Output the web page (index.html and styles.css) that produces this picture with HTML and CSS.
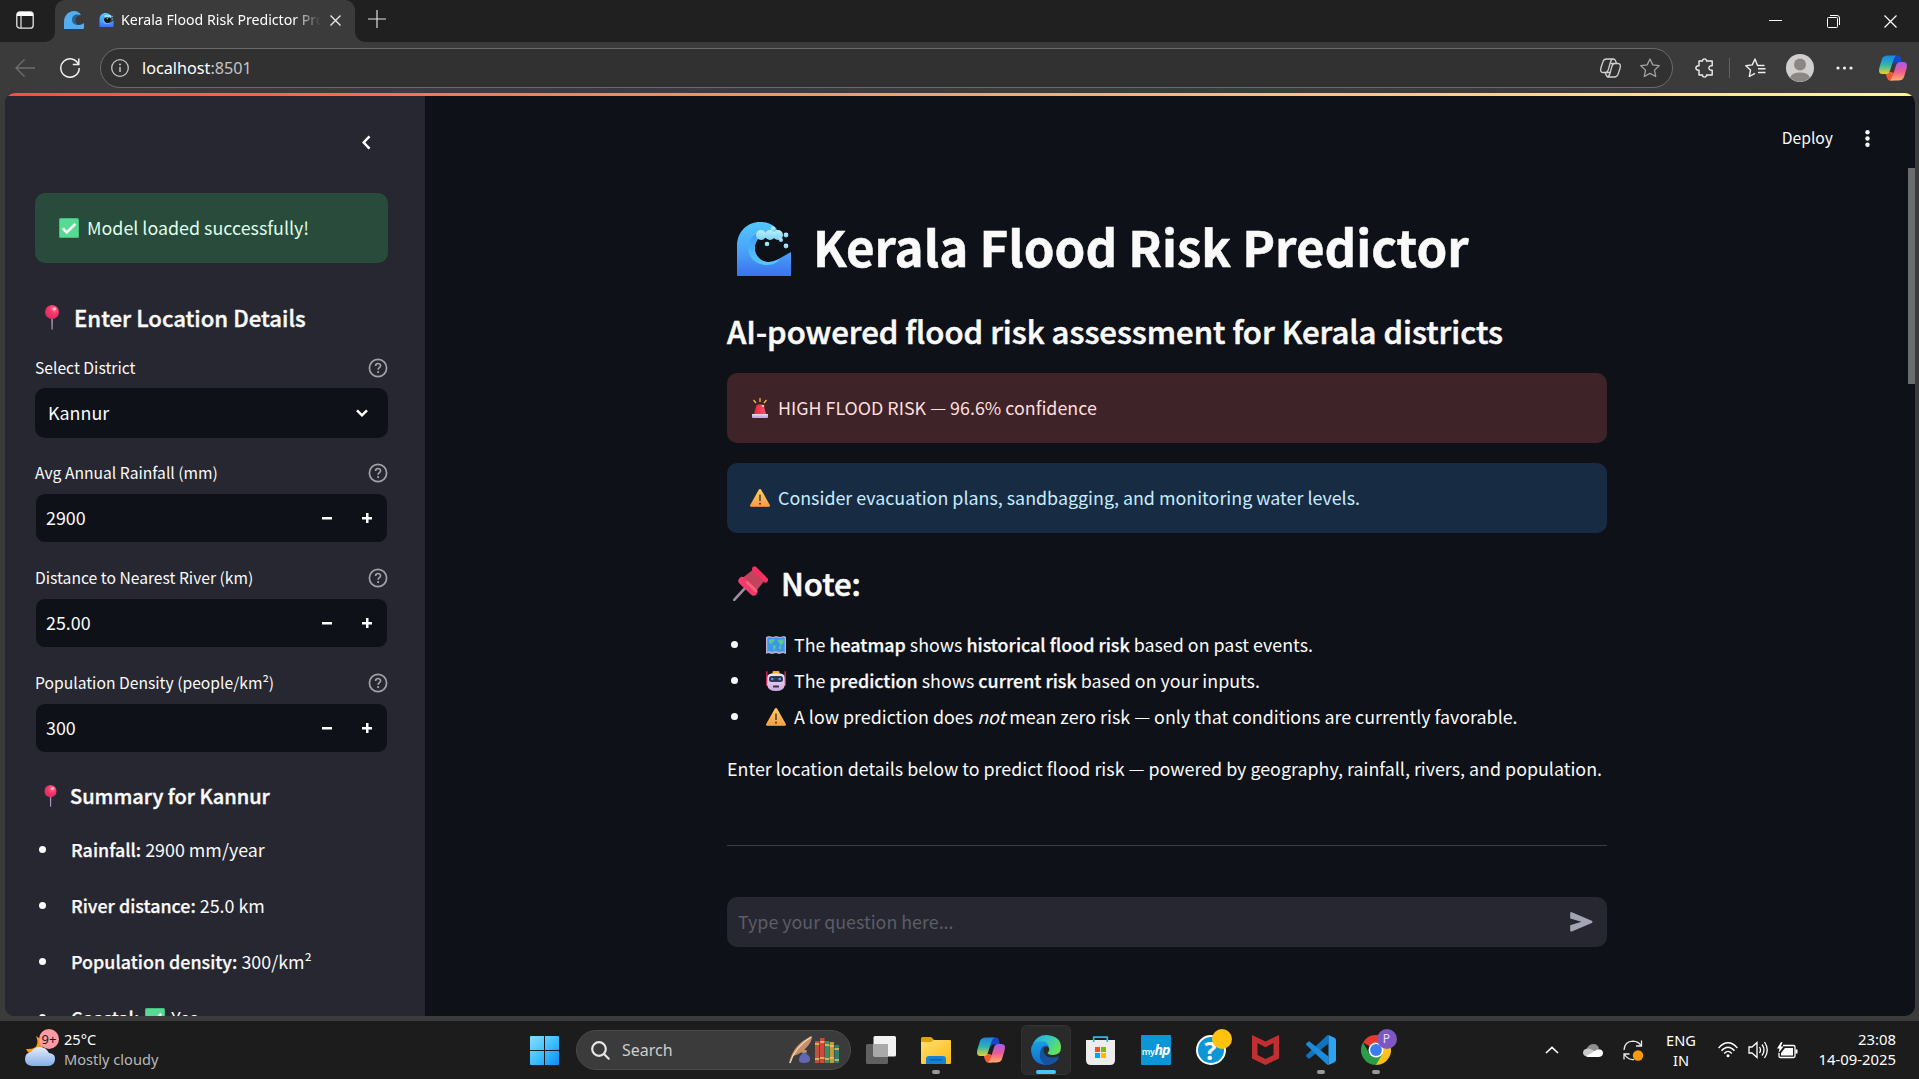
FILE: index.html
```html
<!DOCTYPE html>
<html lang="en">
<head>
<meta charset="utf-8">
<title>Kerala Flood Risk Predictor</title>
<link rel="stylesheet" href="styles.css">
</head>
<body>
<svg class="defs" width="0" height="0" aria-hidden="true">
  <defs>
    <linearGradient id="waveBlue" x1="0" y1="0" x2="0" y2="1"><stop offset="0" stop-color="#52c8ff"/><stop offset=".55" stop-color="#4aa0f8"/><stop offset="1" stop-color="#3a72ee"/></linearGradient>
    <linearGradient id="waveRim" x1="0" y1="0" x2="0" y2="1"><stop offset="0" stop-color="#3f9af5"/><stop offset="1" stop-color="#55c9ff"/></linearGradient>
    <linearGradient id="foam" x1="0" y1="0" x2="0" y2="1"><stop offset="0" stop-color="#b8f2fd"/><stop offset="1" stop-color="#7fd2f5"/></linearGradient>
    <radialGradient id="pinBall" cx=".65" cy=".3" r=".75"><stop offset="0" stop-color="#ff6d8f"/><stop offset=".5" stop-color="#f8326a"/><stop offset="1" stop-color="#cf2f60"/></radialGradient>
    <linearGradient id="amber" x1="0" y1="0" x2="0" y2="1"><stop offset="0" stop-color="#ffd052"/><stop offset="1" stop-color="#f79a4e"/></linearGradient>
    <linearGradient id="siren" x1="0" y1="0" x2="1" y2="0"><stop offset="0" stop-color="#e9263c"/><stop offset="1" stop-color="#ff4f6c"/></linearGradient>
    <linearGradient id="robotFace" x1="0" y1="0" x2="0" y2="1"><stop offset="0" stop-color="#f1e9f5"/><stop offset="1" stop-color="#c9a8e0"/></linearGradient>
    <linearGradient id="cpA" x1="0" y1="0" x2="0" y2="1"><stop offset="0" stop-color="#1a84ea"/><stop offset=".5" stop-color="#2fb5b0"/><stop offset="1" stop-color="#e8d12c"/></linearGradient>
    <linearGradient id="cpB" x1="0" y1="0" x2="0" y2="1"><stop offset="0" stop-color="#a35cf0"/><stop offset=".5" stop-color="#ee5a92"/><stop offset="1" stop-color="#ffb067"/></linearGradient>
    <linearGradient id="winBlue" x1="0" y1="0" x2="1" y2="1"><stop offset="0" stop-color="#8adcff"/><stop offset=".5" stop-color="#3fc1fd"/><stop offset="1" stop-color="#0a8bf5"/></linearGradient>
    <linearGradient id="edgeTop" x1="0" y1="0" x2="1" y2=".5"><stop offset="0" stop-color="#2aa9e0"/><stop offset=".5" stop-color="#32c5c5"/><stop offset="1" stop-color="#66e05a"/></linearGradient>
    <linearGradient id="edgeBody" x1="0" y1="0" x2="0" y2="1"><stop offset="0" stop-color="#1b9de2"/><stop offset="1" stop-color="#0f6fd0"/></linearGradient>
    <linearGradient id="folder" x1="0" y1="0" x2="1" y2="1"><stop offset="0" stop-color="#ffdf70"/><stop offset="1" stop-color="#fdb913"/></linearGradient>
    <linearGradient id="cloud" x1="0" y1="0" x2="0" y2="1"><stop offset="0" stop-color="#e4edfb"/><stop offset="1" stop-color="#84aeea"/></linearGradient>

    <symbol id="i-wave" viewBox="0 0 54 54">
      <path d="M0 54V24C0 10 10 0 23 0c7 0 12 2 16 6l6 13-10 0C24 15 17 21 17 28c0 8 7 12 14 12 8 0 15-6 23-10v24z" fill="url(#waveBlue)"/>
      <path d="M22 11c-7 2-11 8-11 15 0 10 9 17 19 17 7 0 11-3 14-7-4 2-8 4-12 4-8 0-14-6-14-14 0-4 2-8 5-10z" fill="url(#waveRim)"/>
      <path d="M22 16h20l2 10-6 9q-8 5-14 1-6-4-6-11 1-6 4-9z" fill="#0e1117" class="wave-hollow"/>
      <g fill="url(#foam)"><circle cx="24" cy="13" r="5"/><circle cx="33" cy="13" r="5"/><circle cx="41" cy="13" r="5"/><circle cx="36" cy="7" r="2.4"/><circle cx="49" cy="13" r="2.4"/><circle cx="49" cy="24" r="2.4"/><circle cx="30" cy="22" r="2.3"/><circle cx="44" cy="18" r="2"/></g>
    </symbol>
    <symbol id="i-check" viewBox="0 0 20 20"><rect width="20" height="20" rx="1.5" fill="#43bf7d"/><rect x="1" y="1" width="18" height="18" rx="1.5" fill="#59da93"/><path d="M3.8 10.4l4 4.1 8.5-8.6" fill="none" stroke="#fff" stroke-width="2.5"/></symbol>
    <symbol id="i-pin" viewBox="0 0 14 25"><path d="M6.3 13h1.6l-.2 11.3-.6.7-.6-.7z" fill="#a797b0"/><circle cx="7" cy="7" r="7" fill="url(#pinBall)"/><ellipse cx="9.3" cy="4" rx="1.7" ry="1.4" fill="#ffc4d3"/></symbol>
    <symbol id="i-pushpin" viewBox="0 0 34 34">
      <path d="M1.2 33L13 20" stroke="#9b8d9c" stroke-width="2.6" stroke-linecap="round"/>
      <path d="M10 11l9-7 11 11-8 10z" fill="#c3425c"/>
      <path d="M21 3L31.500 13.500" stroke="#f92f62" stroke-width="5" stroke-linecap="round"/>
      <path d="M9 14.500L20 25" stroke="#f53a6e" stroke-width="7.500" stroke-linecap="round"/>
      <path d="M14 16l8 8" stroke="#ff5f78" stroke-width="3" stroke-linecap="round"/>
    </symbol>
    <symbol id="i-siren" viewBox="0 0 16 20"><path d="M8 0v4M1.500 2l2.500 3M14.500 2L12 5" stroke="#f3bb3b" stroke-width="1.3"/><path d="M2 16L4 8.500C4.500 5.500 11.500 5.500 12 8.500L14 16z" fill="url(#siren)"/><circle cx="11" cy="8" r="1.300" fill="#ffb7bd"/><rect y="16" width="16" height="4" rx="1" fill="#c8b0dc"/><rect y="16" width="16" height="1.500" fill="#e0d0ec"/></symbol>
    <symbol id="i-warn" viewBox="0 0 20 18"><path d="M10 0q.8 0 1.200.7L19.800 16q.6 1.500-1 1.700H1.200Q-.4 17.500.2 16L8.800.7Q9.200 0 10 0z" fill="url(#amber)"/><path d="M1 17.500h18" stroke="#dc8240" stroke-width=".9"/><path d="M10 5.500v6.500" stroke="#5b4846" stroke-width="1.700"/><circle cx="10" cy="14.700" r="1.100" fill="#5b4846"/></symbol>
    <symbol id="i-map" viewBox="0 0 20 18"><path d="M0 1l3-1 4 1 3-1 4 1 4-1 2 1v17l-3-1-4 1-3-1-4 1-4-1-2 1z" fill="#b9add0"/><path d="M1.300 2l2-.7 3.700 1 3-1 4 1 3-1 1.700.7v14l-2-.7-3.700.7-3-1-4 1-3-1-1.700.7z" fill="#3c97e8"/><path d="M3 3.500l6-.5-1 2-2 2-1 1.500-2-2zM7 9l3 1-1 3-1.500 2zM11.500 4l6-.8v4l-2 1-1 2-1-3zM13 10l2 .7-.5 3-1.500-1z" fill="#59cb8e"/></symbol>
    <symbol id="i-robot" viewBox="0 0 20 20"><path d="M.8.300v9M19.200.300v9" stroke="#d52b59" stroke-width="1.400"/><rect y="7" width="20" height="8" rx="1.500" fill="#d32d5c"/><rect x="6.500" y="0" width="7" height="4" rx="1" fill="#f5ae28"/><path d="M1.500 5q1-2.500 4-2.500h9q3 0 4 2.500l.3 9q-.8 6-8.800 6t-8.800-6z" fill="url(#robotFace)"/><rect x="3" y="5" width="14" height="6" rx="2.500" fill="#353454"/><circle cx="6.300" cy="8" r="1.300" fill="#2da9f5"/><circle cx="13.700" cy="8" r="1.300" fill="#2da9f5"/><rect x="7" y="14.500" width="6" height="2" rx=".6" fill="#383345"/></symbol>
    <symbol id="i-help" viewBox="0 0 20 20"><circle cx="10" cy="10" r="8.600" fill="none" stroke="#a2a3a8" stroke-width="1.700"/><path d="M7.600 8c0-3.300 5-3.100 5-.3 0 1.800-2.500 2-2.500 4" fill="none" stroke="#a2a3a8" stroke-width="1.600"/><circle cx="10.100" cy="14.100" r="1.100" fill="#a2a3a8"/></symbol>
    <symbol id="i-copilot" viewBox="0 0 28 26">
      <path d="M14 .5h5q2 0 2.700 2l1.300 5h-7l-3 2z" fill="#1846c8"/>
      <path d="M6 17h7l4 3-2 5.500H11q-2 0-2.700-2z" fill="#ee5a33"/>
      <path d="M9 .5h8.500q-2 .8-3 4L11 15.500Q10 19 7 19H3.500Q0 19 0 15.500q0-2 1-5L3 4Q4 .5 9 .5z" fill="url(#cpA)"/>
      <path d="M19 25.500H10.500q2-.8 3-4L17 10.500Q18 7 21 7h3.500Q28 7 28 10.500q0 2-1 5L25 22q-1 3.500-6 3.500z" fill="url(#cpB)"/>
    </symbol>
  </defs>
</svg>

<div class="browser">
  <div class="tabstrip">
    <div class="strip-left"><svg width="18" height="18" viewBox="0 0 18 18"><rect x=".8" y=".8" width="16.400" height="16.400" rx="3" fill="none" stroke="#e6e6e6" stroke-width="1.300"/><path d="M1 5V4q0-3 3-3h10q3 0 3 3v1z" fill="#fff"/><path d="M5 5v12" stroke="#e6e6e6" stroke-width="1.200"/></svg></div>
    <div class="tab">
      <svg class="favicon" width="20" height="18" viewBox="0 0 20 18"><path d="M7 9l1-5 7-1 2 5-1 5-5 2z" fill="#226699"/><path d="M0 18V11C0 5 4 0 10 0c3.500 0 6 1.500 7 4.500-4-2.500-9-.5-9 4 0 4 3 5.500 6 5.500 2.500 0 4.500-.8 6-2V17q0 1-1 1z" fill="#55acee"/><path d="M17 4.500Q12.500 4 11.500 8t3 5.900Q20 13 17 4.500z" fill="#3b3b3b"/></svg>
      <svg class="tab-emoji" width="15" height="14"><use href="#i-wave"/></svg>
      <span class="tab-title">Kerala Flood Risk Predictor Pro</span>
      <svg class="tab-close" width="11" height="11" viewBox="0 0 11 11"><path d="M.5.500l10 10M10.500.500l-10 10" stroke="#e8e8e8" stroke-width="1.400"/></svg>
    </div>
    <div class="strip-right">
      <svg class="newtab" width="18" height="18" viewBox="0 0 18 18"><path d="M9 0v18M0 9h18" stroke="#e2e2e2" stroke-width="1.200"/></svg>
      <div class="winbtns">
        <span><svg width="13" height="13"><path d="M0 5.500h13" stroke="#fff"/></svg></span>
        <span><svg width="13" height="13" viewBox="0 0 13 13" fill="none" stroke="#fff"><rect x=".5" y="2.500" width="10" height="10" rx="1"/><path d="M3 .500h7q2.500 0 2.500 2.500v7"/></svg></span>
        <span><svg width="13" height="13"><path d="M.5.500l12 12M12.500.500l-12 12" stroke="#fff" stroke-width="1.200"/></svg></span>
      </div>
    </div>
  </div>

  <div class="toolbar">
    <svg width="20" height="18" viewBox="0 0 20 18" fill="none" stroke="#6f6f6f" stroke-width="1.300"><path d="M20 9H1M9.500.500L1 9l8.500 8.500"/></svg>
    <svg class="reload" width="20" height="20" viewBox="0 0 20 20" fill="none" stroke="#f0f0f0" stroke-width="1.500"><path d="M18.500 6.500A9.200 9.200 0 1 0 19.200 10"/><path d="M18.800.500v6h-6"/></svg>
    <div class="omnibox">
      <svg width="18" height="18" viewBox="0 0 18 18"><circle cx="9" cy="9" r="8.300" fill="none" stroke="#c6c6c6" stroke-width="1.300"/><path d="M9 8v5" stroke="#c6c6c6" stroke-width="1.500"/><circle cx="9" cy="5.500" r="1" fill="#c6c6c6"/></svg>
      <span class="url">localhost<span>:8501</span></span>
      <svg class="omni-copilot" width="21" height="20" viewBox="0 0 28 26" fill="none" stroke="#cfcfcf" stroke-width="1.800"><path d="M9 1h9q2 0 3 3l1 3h-2q-3 0-4 3.500L13 21q-1 4-4 4M9 1Q5 1 4 4.500L1.500 12Q-.5 19 4 19h3q3 0 4-3.500L14 5q1-4 4-4M19 25h-8q-2 0-3-3l-1-3M19 25q4 0 5-3.500L26.500 14Q28.500 7 24 7h-3M14.500 7h6M8 19h6"/></svg>
      <svg width="20" height="20" viewBox="0 0 20 20" fill="none" stroke="#a2a2a2" stroke-width="1.300" stroke-linejoin="round"><path d="M10 1l2.800 5.900 6.400.8-4.700 4.400 1.200 6.400L10 15.400l-5.700 3.100 1.200-6.400L.8 7.700l6.400-.8z"/></svg>
    </div>
    <svg class="puzzle" width="19" height="20" viewBox="0 0 19 20" fill="none" stroke="#efefef" stroke-width="1.400" stroke-linejoin="round"><path d="M4 3h3.500C7 .2 12 .2 11.500 3h5.700v4.800c-4.400-.8-4.400 5.200 0 4.400V17h-5.700c.5 2.800-4.500 2.800-4 0H4v-4.800C-.2 12.700-.2 7.300 4 7.800z"/></svg>
    <span class="sep"></span>
    <svg width="21" height="20" viewBox="0 0 21 20" fill="none" stroke="#efefef" stroke-width="1.400" stroke-linejoin="round"><path d="M19.500 7.500h-7L10 1 7.300 6.900l-6.500.8 4.700 4.400-1.200 6.400L10 15.400M13 10.800h7.500M13 14.500h7.500"/></svg>
    <svg class="avatar" width="28" height="28" viewBox="0 0 28 28"><circle cx="14" cy="14" r="14" fill="#d1cfcd"/><circle cx="14" cy="10.500" r="6" fill="#8b8785"/><path d="M4 23.500q2-5 10-5t10 5A14 14 0 0 1 4 23.500z" fill="#8b8785"/></svg>
    <svg class="dots" width="17" height="4"><g fill="#f0f0f0"><circle cx="2" cy="2" r="1.600"/><circle cx="8.500" cy="2" r="1.600"/><circle cx="15" cy="2" r="1.600"/></g></svg>
    <svg class="copilot" width="28" height="26"><use href="#i-copilot"/></svg>
  </div>

  <div class="page">
    <aside class="sidebar">
      <div class="side-head"><svg width="9" height="15" viewBox="0 0 9 15"><path d="M7.500 1.300L1.700 7.500l5.800 6.200" fill="none" stroke="#fff" stroke-width="2.500"/></svg></div>
      <div class="alert success"><svg width="20" height="20"><use href="#i-check"/></svg><span>Model loaded successfully!</span></div>
      <h2><svg width="14" height="25"><use href="#i-pin"/></svg><span>Enter Location Details</span></h2>
      <div class="label">Select District<svg width="20" height="20"><use href="#i-help"/></svg></div>
      <div class="field select"><span>Kannur</span><svg width="12" height="9" viewBox="0 0 12 9"><path d="M1 1.300l5 5 5-5" fill="none" stroke="#fff" stroke-width="2.500"/></svg></div>
      <div class="label">Avg Annual Rainfall (mm)<svg width="20" height="20"><use href="#i-help"/></svg></div>
      <div class="field number"><span>2900</span><i class="minus"></i><i class="plus"></i></div>
      <div class="label">Distance to Nearest River (km)<svg width="20" height="20"><use href="#i-help"/></svg></div>
      <div class="field number"><span>25.00</span><i class="minus"></i><i class="plus"></i></div>
      <div class="label">Population Density (people/km²)<svg width="20" height="20"><use href="#i-help"/></svg></div>
      <div class="field number"><span>300</span><i class="minus"></i><i class="plus"></i></div>
      <h3><svg width="13" height="22" viewBox="0 0 14 25"><use href="#i-pin"/></svg><span>Summary for Kannur</span></h3>
      <ul class="summary">
        <li><span><b>Rainfall:</b> 2900 mm/year</span></li>
        <li><span><b>River distance:</b> 25.0 km</span></li>
        <li><span><b>Population density:</b> 300/km²</span></li>
        <li><b>Coastal:</b><svg width="20" height="20"><use href="#i-check"/></svg><span>Yes</span></li>
      </ul>
    </aside>

    <main class="main">
      <header class="app-head"><span>Deploy</span><svg width="5" height="17"><g fill="#fafafa"><circle cx="2.500" cy="2.300" r="2.200"/><circle cx="2.500" cy="8.500" r="2.200"/><circle cx="2.500" cy="14.700" r="2.200"/></g></svg></header>
      <div class="content">
        <h1><svg width="54" height="54"><use href="#i-wave"/></svg><span>Kerala Flood Risk Predictor</span></h1>
        <h2 class="tagline">AI-powered flood risk assessment for Kerala districts</h2>
        <div class="alert error"><svg width="20" height="20" viewBox="0 0 16 20"><use href="#i-siren" width="16" height="20"/></svg><span>HIGH FLOOD RISK — 96.6% confidence</span></div>
        <div class="alert info"><svg width="20" height="18"><use href="#i-warn"/></svg><span>Consider evacuation plans, sandbagging, and monitoring water levels.</span></div>
        <h2 class="note"><svg width="35" height="35"><use href="#i-pushpin"/></svg><span>Note:</span></h2>
        <ul class="notes">
          <li><svg width="20" height="18"><use href="#i-map"/></svg><span>The <b>heatmap</b> shows <b>historical flood risk</b> based on past events.</span></li>
          <li><svg width="20" height="20"><use href="#i-robot"/></svg><span>The <b>prediction</b> shows <b>current risk</b> based on your inputs.</span></li>
          <li><svg width="20" height="18"><use href="#i-warn"/></svg><span>A low prediction does <em>not</em> mean zero risk — only that conditions are currently favorable.</span></li>
        </ul>
        <p class="lead">Enter location details below to predict flood risk — powered by geography, rainfall, rivers, and population.</p>
        <hr>
        <div class="chat"><span>Type your question here...</span><svg width="23" height="20" viewBox="0 0 23 20"><path d="M1.800.200L21.800 8.700q1.500 1.100 0 2.200L1.800 19.400Q.2 20 .2 18.300V13.200L11.500 9.800.2 6.600V1.200Q.2-.4 1.800.200z" fill="#a3a5b3"/></svg></div>
      </div>
    </main>
    <div class="progress"></div>
    <div class="scrollbar"></div>
  </div>
</div>

<footer class="taskbar">
  <div class="weather">
    <div class="weather-icon">
      <svg width="31" height="36" viewBox="0 0 31 36"><path d="M11 5c3 7 2 14-10 13 2 5 8 7 13 4s6-12-3-17z" fill="#f39a1f"/><path d="M7 35q-7-1-7-7t6-7q3-5 9-5t9 6q7 1 6 7-1 6-8 6z" fill="url(#cloud)"/></svg>
      <span class="badge">9+</span>
    </div>
    <div class="weather-text"><span>25°C</span><span>Mostly cloudy</span></div>
  </div>
  <svg class="start" width="29" height="29" viewBox="0 0 29 29"><path d="M0 1q0-1 1-1h13v14H0zM15 0h13q1 0 1 1v13H15zM0 15h14v14H1q-1 0-1-1zM15 15h14v13q0 1-1 1H15z" fill="url(#winBlue)"/></svg>
  <div class="search">
    <svg width="19" height="19" viewBox="0 0 19 19" fill="none" stroke="#e6e6e6" stroke-width="2.200" stroke-linecap="round"><circle cx="8" cy="8" r="6.800"/><path d="M13 13l4.700 4.700"/></svg>
    <span>Search</span>
    <svg class="books" width="50" height="28" viewBox="0 0 50 28"><path d="M0 27Q4 8 23 0q0 6-6 12-5 6-13 8l-3 7z" fill="#c78f69"/><path d="M1 27Q6 11 22 1" fill="none" stroke="#f2d9bd" stroke-width="1.200"/><path d="M12.500 14h5v4q4 2 3.500 6-.5 3-6 3t-5-3q0-4 3-6z" fill="#6267b0"/><path d="M12.500 14h5v2.500h-5z" fill="#c9984f"/><rect x="26" y="5" width="4.300" height="22" fill="#b8553e"/><rect x="31" y="2" width="4.500" height="25" fill="#d0473b"/><rect x="36" y="5" width="4.200" height="22" fill="#3f8c63"/><rect x="40.700" y="6" width="4.200" height="21" fill="#c59a3d"/><rect x="45.500" y="9" width="4.500" height="18" fill="#2e7f6d"/><path d="M26 8h4.300M31 6h4.500M36 9h4.200M40.700 10h4.200M45.500 13h4.500M26 23h4.300M31 22h4.500M36 23h4.200M40.700 22h4.200M45.500 24h4.500" stroke="#edc761" stroke-width="1.400"/></svg>
  </div>
  <div class="apps">
    <div class="app"><svg width="30" height="28" viewBox="0 0 30 28"><rect y="8" width="22" height="20" rx="1.500" fill="#606060"/><rect x="7.500" width="22.500" height="20.500" rx="1.500" fill="#f2f2f2"/><path d="M7.500 8H22v12.500H7.500z" fill="#a9a9a9"/></svg></div>
    <div class="app"><svg width="30" height="27" viewBox="0 0 30 27"><path d="M0 8V1.500Q0 0 1.500 0H9q1.500 0 2.500 1.200L13 3v5z" fill="#e2a10c"/><path d="M0 5h10l2.500-2H29q1 0 1 1v22q0 1-1 1H1q-1 0-1-1z" fill="url(#folder)"/><path d="M5 27v-5q0-3 3-3h14q3 0 3 3v5z" fill="#1581d2"/><path d="M9 22.800h12" stroke="#0b5aa2" stroke-width="1.200"/></svg><i class="dot"></i></div>
    <div class="app"><svg width="28" height="26"><use href="#i-copilot"/></svg></div>
    <div class="app active"><svg width="30" height="30" viewBox="0 0 30 30"><path d="M1.500 9.500Q5.500 0 15.500 0 30 1 30 12.500q0 7-7.500 7.500-5 0-6-2 3-3 1-6Q12 5 1.500 9.500z" fill="url(#edgeTop)"/><path d="M0 15q0-7 7-8.500 9-1.500 11 5-6-1-7 5 0 8 9 9 5 0 7.500-2Q23 30 15 30 1 29 0 15z" fill="url(#edgeBody)"/><path d="M10 14q2-4 6-3.500-5 2-3 7 2 5 8 5 4 0 6.500-1.500.5 2-2 4.500-3.500 4-10.500 4.500Q6 25 10 14z" fill="#13539f"/></svg><i class="dot wide"></i></div>
    <div class="app"><svg width="29" height="29" viewBox="0 0 29 29"><path d="M7.700 8V1.200h13.600V8" fill="none" stroke="#2fb5ea" stroke-width="1.700"/><path d="M0 4h29v20q0 5-5 5H5q-5 0-5-5z" fill="#ededed"/><path d="M7.700 4v2M21.300 4v2" stroke="#2fb5ea" stroke-width="1.700"/><path fill="#f25022" d="M9 11h5v5H9z"/><path fill="#7fba00" d="M15 11h5v5h-5z"/><path fill="#00a4ef" d="M9 17h5v5H9z"/><path fill="#ffb900" d="M15 17h5v5h-5z"/></svg></div>
    <div class="app"><span class="myhp"><small>my</small>hp</span></div>
    <div class="app"><span class="hphelp">?</span><i class="notice"></i></div>
    <div class="app"><svg width="27" height="30" viewBox="0 0 27 30"><path d="M0 0l13.500 6.500L27 0v23.500L13.500 30 0 23.500zM5.500 8v12l8 4 8-4V8l-8 4.300z" fill="#c12f31" fill-rule="evenodd"/></svg></div>
    <div class="app"><svg width="30" height="30" viewBox="0 0 30 30"><path d="M22.500 0v8.500L3.800 23.300Q3 24 2.200 23.200L.5 21.700q-1-1 0-2L20.700.700Q21.500 0 22.500 0z" fill="#0f73bd"/><path d="M22.500 30v-8.500L3.800 6.700Q3 6 2.200 6.800L.5 8.300q-1 1 0 2L20.700 29.300q.8.700 1.800.7z" fill="#1b8bdb"/><path d="M22.500 0l6 2.700Q30 3.500 30 5v20q0 1.500-1.500 2.300L22.500 30z" fill="#2ea3f2"/></svg><i class="dot"></i></div>
    <div class="app"><svg width="30" height="30" viewBox="0 0 30 30"><path d="M15 15L2 7.500A15 15 0 0 1 28 7.500H15z" fill="#e33b2e"/><path d="M15 15L28 7.500A15 15 0 0 1 15 30l-1-1z" fill="#fbc116"/><path d="M15 15l6.500 3.800L15 30A15 15 0 0 1 2 7.500l6.500 11.300z" fill="#2b9d49"/><circle cx="15" cy="15" r="7.500" fill="#fff"/><circle cx="15" cy="15" r="5.900" fill="#3b7ded"/></svg><i class="dot"></i><span class="profile">P</span></div>
  </div>
  <div class="tray">
    <svg width="14" height="8" viewBox="0 0 14 8"><path d="M1 7l6-5.700L13 7" fill="none" stroke="#fff" stroke-width="1.600"/></svg>
    <svg class="onedrive" width="20" height="13" viewBox="0 0 20 13"><path d="M3.500 5Q6 0 10.500 0T16 4.500L10 8z" fill="#8f8f8f"/><path d="M4 12.500Q0 12 0 8.500T5 4.500q3 0 8 4l-6 4z" fill="#c9c9c9"/><path d="M3 12.300L14 5.500q5-1 6 3 0 4-4 4.500H5z" fill="#fff"/></svg>
    <svg class="sync" width="21" height="21" viewBox="0 0 21 21"><path d="M1 10Q1.500 1.500 10 1.200q5.500.3 8 4.500M18.500.500v5.500H13M1 19.500V14h5.500M1.500 14.500Q5 20 11 19.500" fill="none" stroke="#e9e9e9" stroke-width="1.300"/><circle cx="15" cy="15.500" r="5.200" fill="#ff9a0c"/></svg>
    <div class="lang"><span>ENG</span><span>IN</span></div>
    <svg class="wifi" width="20" height="16" viewBox="0 0 20 16" fill="none" stroke="#fff" stroke-width="1.400"><path d="M.6 6Q10-4.500 19.400 6M3.500 8.700q6.500-7 13 0M6.200 11.400q3.800-4 7.600 0"/><circle cx="10" cy="13.700" r="1.500" fill="#fff" stroke="none"/></svg>
    <svg width="20" height="18" viewBox="0 0 20 18" fill="none" stroke="#fff" stroke-width="1.300"><path d="M1 6h3l5-4.500v15L4 12H1zM11.500 6q2 3 0 6M14 3.500q4 5.500 0 11M16.500 1q5.500 8 0 16"/></svg>
    <svg width="21" height="17" viewBox="0 0 21 17"><path d="M6 3.500h10.500q1.500 0 1.500 1.500v9q0 1.500-1.500 1.500H3.500Q2 15.500 2 14V11" fill="none" stroke="#fff" stroke-width="1.300"/><path d="M8 6h8v7.500H4V11z" fill="#fff"/><path d="M18.500 7.500h2v4h-2zM4 0L0 6.500h2.500L1.500 11 6.500 4.500H3.800L5.500.500z" fill="#fff"/></svg>
    <div class="clock"><span>23:08</span><span>14-09-2025</span></div>
  </div>
</footer>
</body>
</html>
```
FILE: styles.css
```css
* { box-sizing: border-box; }

body {
  margin: 0;
  width: 1919px;
  height: 1079px;
  overflow: hidden;
  display: flex;
  flex-direction: column;
  background: #1c1c1c;
  color: #fff;
  font-family: "Noto Sans", "Open Sans", sans-serif;
}

svg { display: block; flex: none; }
.defs { position: absolute; }
.tab-emoji .wave-hollow { fill: #3b3b3b; }

/* Browser chrome */
.browser {
  height: 1021px;
  display: flex;
  flex-direction: column;
  background: #3b3b3b;
}
.tabstrip { height: 42px; display: flex; background: #3b3b3b; }
.strip-left {
  width: 55px;
  padding: 11px 0 0 16px;
  background: #202020;
  border-bottom-right-radius: 10px;
}
.tab {
  width: 300px;
  display: flex;
  align-items: center;
  padding: 0 14px 2px 9px;
  position: relative;
}
.tab::before, .tab::after {
  content: "";
  position: absolute;
  inset: 0 0 auto 0;
  height: 10px;
  background: #202020;
}
.tab::after {
  height: 20px;
  border-radius: 10px 10px 0 0;
  background: #3b3b3b;
}
.tab > * { position: relative; z-index: 1; }
.tab-emoji { margin-left: 15px; }
.tab-title {
  flex: 1;
  margin-left: 7px;
  margin-right: 10px;
  height: 24px;
  line-height: 23px;
  font-size: 14.15px;
  white-space: nowrap;
  overflow: hidden;
  -webkit-mask-image: linear-gradient(90deg, #000 172px, transparent 200px);
  mask-image: linear-gradient(90deg, #000 172px, transparent 200px);
}
.strip-right {
  flex: 1;
  display: flex;
  justify-content: space-between;
  padding-left: 13px;
  background: #202020;
  border-bottom-left-radius: 10px;
}
.newtab { margin-top: 10px; }
.winbtns { display: flex; }
.winbtns span { width: 58px; padding-top: 15px; display: flex; justify-content: center; }
.winbtns span:last-child { width: 57px; }

.toolbar {
  height: 51px;
  display: flex;
  align-items: center;
  padding: 0 12px 0 15px;
}
.reload { margin-left: 25px; }
.omnibox {
  width: 1573px;
  height: 40px;
  margin-left: 20px;
  padding: 0 12px 0 10px;
  display: flex;
  align-items: center;
  background: #313131;
  border: 1px solid #6b6b6b;
  border-radius: 20px;
}
.url { flex: 1; margin-left: 13px; font-size: 16.2px; line-height: 24px; }
.url span { color: #c4c4c4; }
.omni-copilot { margin-right: 19px; }
.puzzle { margin-left: 22px; }
.sep { width: 1px; height: 20px; margin: 0 15px; background: #606060; }
.avatar { margin-left: 20px; }
.dots { margin-left: 22px; }
.copilot { margin-left: 26px; }

/* Streamlit page */
.page {
  position: relative;
  height: 923px;
  margin: 0 4px 0 5px;
  display: flex;
  overflow: hidden;
  border-radius: 10px;
  background: #0e1117;
  color: #fafafa;
  font-family: "Noto Sans CJK SC", "Noto Sans", sans-serif;
  font-size: 17.88px;
  line-height: 32px;
}
.page b { font-weight: 500; -webkit-text-stroke: .25px; }
.progress {
  position: absolute;
  inset: 0 0 auto 0;
  height: 3px;
  background: linear-gradient(90deg, #ff4b4b, #fffd80);
}
.scrollbar {
  position: absolute;
  top: 75px;
  right: 0;
  width: 7px;
  height: 216px;
  background: #6b6c6f;
}
h1, h2, h3, p, ul { margin: 0; padding: 0; }
h1, h2, h3 { display: flex; align-items: center; white-space: nowrap; }
h2, h3 { font-weight: 500; -webkit-text-stroke: .4px; }
ul { list-style: none; }

.sidebar { width: 420px; padding: 0 37px 0 30px; background: #262730; }
.side-head { height: 100px; display: flex; justify-content: flex-end; padding: 42px 17px 0 0; }
.alert {
  height: 70px;
  display: flex;
  align-items: center;
  padding-left: 23px;
  border-radius: 10px;
}
.alert span { margin-left: 8px; padding-bottom: 2px; }
.success { background: #294b3b; color: #dffde9; padding-left: 24px; }
.sidebar h2 { height: 40px; margin-top: 34px; padding-left: 10px; font-size: 22.2px; }
.sidebar h2 span { margin-left: 15px; }
.sidebar h3 { height: 30px; margin-top: 28px; padding-left: 9px; font-size: 20px; }
.sidebar h3 span { margin-left: 13px; }
.label {
  height: 23px;
  margin-top: 23px;
  display: flex;
  align-items: center;
  justify-content: space-between;
  font-size: 15.66px;
  line-height: 23px;
}
h2 + .label { margin-top: 19px; }
.field {
  height: 50px;
  margin-top: 9px;
  display: flex;
  align-items: center;
  background: #0e1117;
  border-radius: 10px;
}
.field span { flex: 1; padding-bottom: 2px; }
.select { padding: 0 20px 0 13px; }
.number { padding: 0 15px 0 10px; border: 1px solid #262730; }
.minus, .plus {
  width: 10px;
  height: 10px;
  background: linear-gradient(#fff, #fff) center / 10px 2.5px no-repeat;
}
.plus {
  margin-left: 30px;
  background: linear-gradient(#fff, #fff) center / 10px 2.5px no-repeat,
    linear-gradient(#fff, #fff) center / 2.5px 10px no-repeat;
}
.summary { margin-top: 25px; }
.summary li {
  height: 27px;
  margin-bottom: 29px;
  line-height: 27px;
  display: flex;
  align-items: center;
  gap: 6px;
}
.summary li::before, .notes li::before {
  content: "";
  width: 7px;
  height: 7px;
  border-radius: 50%;
  background: #fafafa;
  flex: none;
}
.summary li::before { margin: 0 19px 0 4px; }

.main { flex: 1; }
.app-head {
  height: 90px;
  display: flex;
  align-items: center;
  justify-content: flex-end;
  padding-right: 45px;
  font-size: 15.7px;
}
.app-head svg { margin-left: 32px; }
.content { width: 880px; margin-left: 302px; padding-top: 30px; }
h1 { height: 66px; padding-left: 10px; font-size: 49.25px; line-height: 66px; font-weight: 700; -webkit-text-stroke: .5px; }
h1 span { margin-left: 22px; }
.content h1 svg { margin-top: 6px; }
.tagline { height: 42px; margin-top: 31px; font-size: 31.1px; -webkit-text-stroke: .6px; }
.error { margin-top: 21px; background: #3e2428; color: #ffdede; }
.info { margin-top: 20px; background: #172c43; color: #c7ebff; }
.note { height: 42px; margin-top: 29px; padding-left: 6px; font-size: 31.1px; -webkit-text-stroke: .6px; }
.note span { margin-left: 13px; }
.notes { margin-top: 22px; }
.notes li { height: 36px; display: flex; align-items: center; white-space: nowrap; }
.notes li::before { margin: 1px 28px 0 4px; }
.notes li svg { margin-top: 1px; }
.notes li span { margin-left: 8px; }
.lead { height: 32px; margin-top: 18px; white-space: nowrap; }
hr { height: 1px; margin: 61px 0 51px; border: 0; background: #3c3e44; }
.chat {
  height: 50px;
  display: flex;
  align-items: center;
  justify-content: space-between;
  padding: 0 14px 0 11px;
  background: #262730;
  border-radius: 10px;
  color: #5c5d68;
}
.chat span { padding-bottom: 2px; }

/* Taskbar */
.taskbar {
  height: 58px;
  display: flex;
  align-items: center;
  background: #1c1c1c;
}
.weather { width: 530px; display: flex; padding-left: 25px; }
.weather-icon { position: relative; width: 39px; }
.badge {
  position: absolute;
  left: 14px;
  top: -2px;
  width: 20px;
  height: 20px;
  border-radius: 50%;
  background: #ff99a4;
  color: #1c1c1c;
  font-size: 13px;
  line-height: 20px;
  text-align: center;
}
.weather-text, .lang, .clock { display: flex; flex-direction: column; font-size: 14.6px; line-height: 20px; }
.weather-text, .clock { margin-top: -2px; }
.weather-text span + span { color: #b9b9b9; }
.search {
  width: 275px;
  height: 40px;
  margin-left: 17px;
  padding: 0 11px 0 14px;
  display: flex;
  align-items: center;
  background: #3b3b3b;
  border: 1px solid #4a4a4a;
  border-radius: 20px;
}
.search span { flex: 1; margin-left: 12px; color: #cdcdcd; font-size: 16px; }
.apps { display: flex; margin-left: 2px; }
.app {
  position: relative;
  width: 50px;
  height: 50px;
  margin: 0 2.5px;
  display: flex;
  align-items: center;
  justify-content: center;
  border-radius: 6px;
}
.active { background: #2a2a2a; border: 1px solid #333; }
.dot {
  position: absolute;
  bottom: 1px;
  width: 8px;
  height: 4px;
  border-radius: 2px;
  background: #989898;
}
.active .dot { bottom: 0; }
.wide { width: 20px; background: #4cc2ff; }
.myhp {
  width: 30px;
  height: 30px;
  display: flex;
  align-items: baseline;
  justify-content: center;
  background: #0c96d6;
  border-radius: 1px;
  font: italic 700 14px/29px "Open Sans", sans-serif;
  letter-spacing: -1px;
}
.myhp small { font: 600 9px/29px "Open Sans", sans-serif; letter-spacing: -.3px; }
.hphelp {
  width: 30px;
  height: 30px;
  border: 2px solid #fff;
  border-radius: 50%;
  background: #0c96d6;
  font: 700 25px/26px "Open Sans", sans-serif;
  text-align: center;
}
.notice, .profile { position: absolute; right: 4px; top: 4px; width: 20px; height: 20px; border-radius: 50%; }
.notice { background: #ffc20e; }
.profile { background: #7e57c2; color: #e6dcf5; font-size: 12px; line-height: 20px; text-align: center; }
.tray { margin-left: auto; padding-right: 23px; display: flex; align-items: center; }
.onedrive { margin-left: 24px; }
.sync { margin-left: 20px; }
.lang { width: 30px; margin-left: 22px; align-items: center; }
.wifi { margin: 0 10px 0 22px; }
.tray .wifi + svg { margin-right: 9px; }
.clock { width: 78px; margin-left: 20px; align-items: flex-end; font-size: 14.85px; }
```
